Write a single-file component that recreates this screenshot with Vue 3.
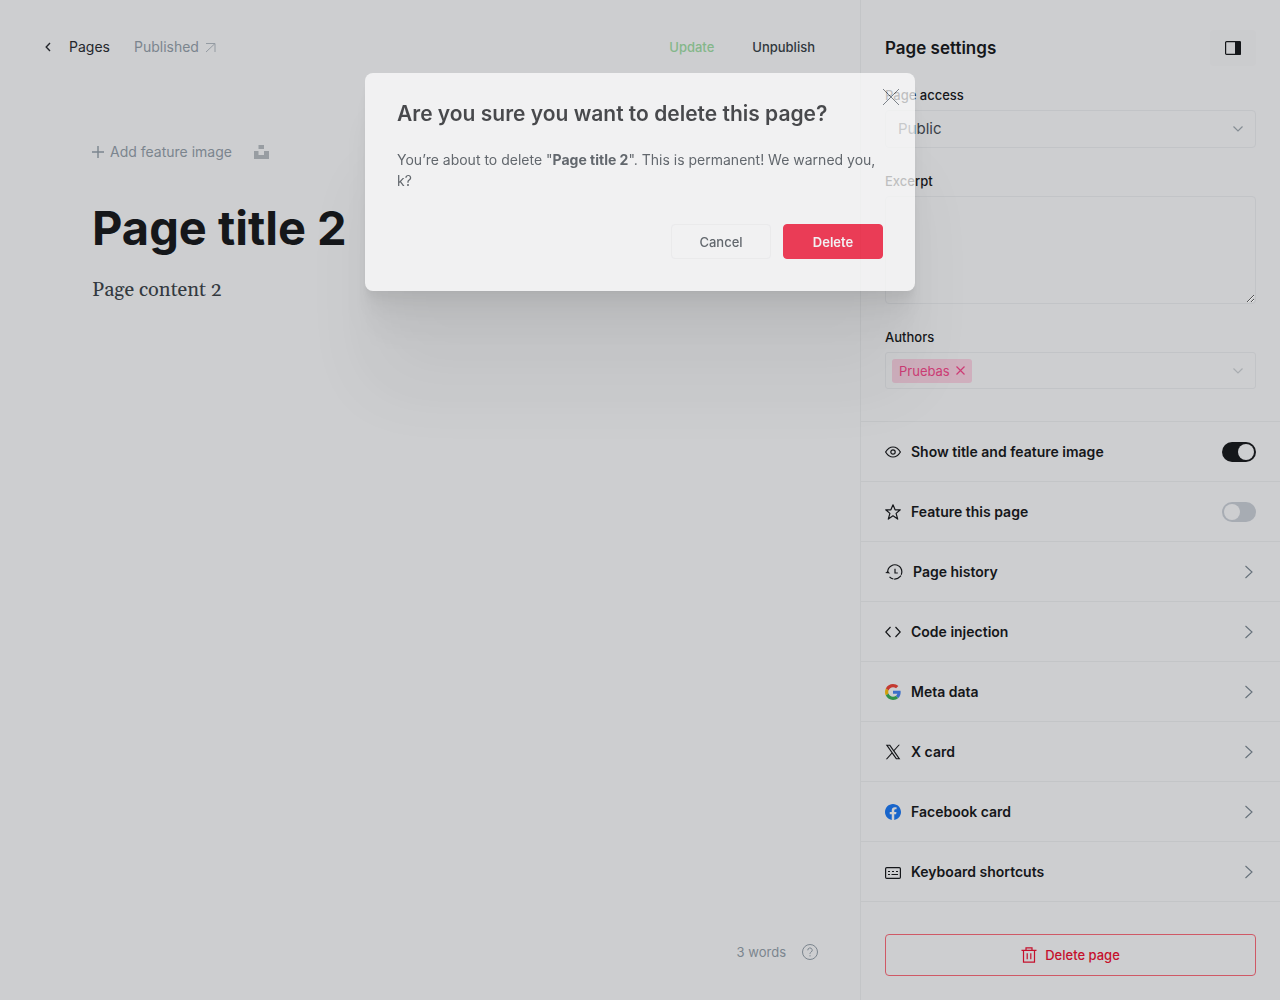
<script setup>
import { ref } from 'vue'

const access = ref('public')
const excerpt = ref('')
const showTitle = ref(true)
const featured = ref(false)
const links = ['Page history', 'Code injection', 'Meta data', 'X card', 'Facebook card', 'Keyboard shortcuts']
</script>

<template>
  <div class="app">
    <main class="editor">
      <header class="topbar">
        <a class="back" href="#">
          <svg width="6" height="10" viewBox="0 0 6 10"><path d="M5 1 1.200 5 5 9" fill="none" stroke="currentColor" stroke-width="1.400" /></svg>
          Pages
        </a>
        <a class="status" href="#">
          Published
          <svg width="11" height="11" viewBox="0 0 11 11"><path d="M1 1.500h9v8.500M10 1.500 1 10" fill="none" stroke="currentColor" /></svg>
        </a>
        <div class="actions">
          <button class="update" type="button">Update</button>
          <button type="button">Unpublish</button>
        </div>
      </header>

      <article class="content">
        <div class="feature">
          <button type="button">
            <svg width="12" height="12" viewBox="0 0 12 12"><path d="M6 0v12M0 6h12" stroke="currentColor" stroke-width="1.400" /></svg>
            Add feature image
          </button>
          <button type="button" aria-label="Unsplash">
            <svg width="15" height="14" viewBox="0 0 15 14"><path d="M4.500 0h5.500v4H4.500zM0 6h4.500v4H10V6h5v8H0z" fill="#989da2" /></svg>
          </button>
        </div>
        <h1>Page title 2</h1>
        <p>Page content 2</p>
      </article>

      <footer class="count">
        <span>3 words</span>
        <a href="#" aria-label="Help">
          <svg width="16" height="16" viewBox="0 0 16 16" fill="none" stroke="currentColor"><circle cx="8" cy="8" r="7.500" /><path d="M5.800 6.300a2.200 2.200 0 1 1 3.400 1.700C8.300 8.600 8 8.900 8 10M8 11.200v1.200" /></svg>
        </a>
      </footer>
    </main>

    <aside class="settings">
      <div class="panel">
        <div class="head">
          <h2>Page settings</h2>
          <button type="button" aria-label="Toggle settings">
            <svg width="16" height="14" viewBox="0 0 16 14"><rect x=".6" y=".6" width="14.800" height="12.800" rx="1" fill="none" stroke="#15171a" stroke-width="1.200" /><path d="M10 0h4.500A1.500 1.500 0 0 1 16 1.500v11a1.500 1.500 0 0 1-1.500 1.500H10z" fill="#15171a" /></svg>
          </button>
        </div>

        <div class="field">
          <label for="access">Page access</label>
          <div class="control">
            <select id="access" v-model="access"><option value="public">Public</option></select>
            <svg class="caret" width="10" height="6" viewBox="0 0 10 6"><path d="m.5.5 4.500 4.500L9.500.5" fill="none" stroke="#858d94" stroke-width="1.200" /></svg>
          </div>
        </div>
        <div class="field">
          <label for="excerpt">Excerpt</label>
          <textarea id="excerpt" v-model="excerpt"></textarea>
        </div>
        <div class="field">
          <label for="authors">Authors</label>
          <div class="tokens">
            <span class="token">Pruebas
              <button type="button" aria-label="Remove Pruebas"><svg width="9" height="9" viewBox="0 0 9 9"><path d="m.5.5 8 8m0-8-8 8" stroke="currentColor" stroke-width="1.200" /></svg></button>
            </span>
            <input id="authors" type="text" />
            <svg class="caret" width="10" height="6" viewBox="0 0 10 6"><path d="m.5.5 4.500 4.500L9.500.5" fill="none" stroke="#a9adb1" stroke-width="1.200" /></svg>
          </div>
        </div>
      </div>

      <ul class="rows">
        <li>
          <label class="row">
            <svg width="16" height="16" viewBox="0 0 16 16" fill="none" stroke="currentColor" stroke-width="1.200"><path d="M.6 8C2.400 5 5 3 8 3s5.600 2 7.400 5c-1.800 3-4.400 5-7.400 5S2.400 11 .6 8z" /><circle cx="8" cy="8" r="2.200" /></svg>
            <span>Show title and feature image</span>
            <input v-model="showTitle" class="switch" type="checkbox" />
          </label>
        </li>
        <li>
          <label class="row">
            <svg width="16" height="16" viewBox="0 0 16 16" fill="none" stroke="currentColor" stroke-width="1.200" stroke-linejoin="round"><path d="m8 .8 2.100 5h5.200l-4.200 3.600 1.600 5.700L8 11.800l-4.700 3.300 1.600-5.700L.7 5.800h5.200z" /></svg>
            <span>Feature this page</span>
            <input v-model="featured" class="switch" type="checkbox" />
          </label>
        </li>
        <li v-for="(name, i) in links" :key="name">
          <button class="row" type="button">
            <svg v-if="i === 0" width="18" height="16" viewBox="0 0 18 16" fill="none" stroke="currentColor" stroke-width="1.200"><path d="M2.700 8.500A7.200 7.200 0 0 1 13.500 1.800" /><path d="M13.500 1.800A7.200 7.200 0 1 1 4.500 12.900" stroke-dasharray="10 .8 8 .8" /><path d="M.2 9 2.700 7l2.500 2.600z" fill="currentColor" stroke="none" /><path d="M10 4.800V9h2.800" /></svg>
            <svg v-else-if="i === 1" width="16" height="16" viewBox="0 0 16 16" fill="none" stroke="currentColor" stroke-width="1.200"><path d="M5.500 3 .8 8l4.700 5M10.500 3l4.700 5-4.700 5" /></svg>
            <svg v-else-if="i === 2" width="16" height="16" viewBox="0 0 48 48"><path fill="#c43a31" d="M24 9.500c3.540 0 6.710 1.220 9.210 3.600l6.850-6.850C35.900 2.380 30.470 0 24 0 14.620 0 6.510 5.380 2.560 13.220l7.980 6.190C12.430 13.720 17.740 9.500 24 9.500z" /><path fill="#3c6fc9" d="M46.980 24.550c0-1.570-.15-3.090-.38-4.550H24v9.020h12.940c-.58 2.960-2.260 5.480-4.780 7.180l7.730 6c4.510-4.180 7.090-10.360 7.090-17.650z" /><path fill="#d09e0c" d="M10.530 28.590A14.500 14.500 0 0 1 9.770 24c0-1.600.27-3.140.76-4.590l-7.980-6.190A23.900 23.900 0 0 0 0 24c0 3.880.92 7.540 2.560 10.780z" /><path fill="#2f9149" d="M24 48c6.480 0 11.930-2.130 15.890-5.810l-7.730-6c-2.150 1.450-4.920 2.300-8.160 2.300-6.260 0-11.570-4.220-13.470-9.910l-7.980 6.190C6.510 42.620 14.620 48 24 48z" /></svg>
            <svg v-else-if="i === 3" width="16" height="16" viewBox="0 0 24 24"><path fill="currentColor" d="M14.200 10.200 22.300 1h-2l-7 8-5.600-8H1.200l8.500 12.200L1.200 23h2l7.400-8.500 5.900 8.500H23zM4.400 2.800h2.200L19.900 21.200h-2.300z" /></svg>
            <svg v-else-if="i === 4" width="16" height="16" viewBox="0 0 24 24"><path fill="#1865cb" d="M24 12.070C24 5.400 18.630 0 12 0S0 5.400 0 12.070C0 18.100 4.390 23.090 10.130 24v-8.440H7.080v-3.490h3.050V9.410c0-3.020 1.790-4.690 4.530-4.690 1.310 0 2.680.24 2.680.24v2.970h-1.510c-1.490 0-1.960.93-1.960 1.890v2.250h3.330l-.53 3.490h-2.800V24C19.610 23.090 24 18.100 24 12.070z" /></svg>
            <svg v-else width="16" height="16" viewBox="0 0 16 16" fill="none" stroke="currentColor" stroke-width="1.200"><rect x=".6" y="3.600" width="14.800" height="10.800" rx="1.200" /><path d="M3 7.500h2m2 0h2m2 0h2M3 10.500h2m1.500 0H13" /></svg>
            <span>{{ name }}</span>
            <svg class="next" width="8" height="14" viewBox="0 0 8 14"><path d="m.5 1 6.500 6-6.500 6" fill="none" stroke="#66717b" stroke-width="1.100" /></svg>
          </button>
        </li>
      </ul>

      <div class="danger">
        <button type="button">
          <svg width="16" height="16" viewBox="0 0 16 16" fill="none" stroke="currentColor" stroke-width="1.200"><path d="M.5 3.300h15M5 3.300V.8h6v2.500M2.500 3.300v11.900h11V3.300M6.200 6.300v6M9.800 6.300v6" /></svg>
          Delete page
        </button>
      </div>
    </aside>

    <div class="overlay">
      <section class="modal" role="dialog" aria-modal="true" aria-labelledby="dialog-title">
        <h2 id="dialog-title">Are you sure you want to delete this page?</h2>
        <p>You’re about to delete "<strong>Page title 2</strong>". This is permanent! We warned you, k?</p>
        <div class="buttons">
          <button type="button">Cancel</button>
          <button class="confirm" type="button">Delete</button>
        </div>
        <button class="close" type="button" aria-label="Close">
          <svg width="16" height="16" viewBox="0 0 16 16"><path d="m0 0 16 16m0-16L0 16" stroke="#5d666e" stroke-width="1" /></svg>
        </button>
      </section>
    </div>
  </div>
</template>

<style>
body { margin: 0; background: #cdced0; }
</style>

<style scoped>
* { box-sizing: border-box; }
.app { display: flex; min-height: 100vh; color: #15171a; background: #cdced0; font: 14px/20px Inter, sans-serif; }
svg { display: block; flex: none; }
h1, h2, p, ul { margin: 0; padding: 0; }
a { color: inherit; text-decoration: none; }
button { display: flex; align-items: center; padding: 0; border: 0; background: none; color: inherit; font: inherit; cursor: pointer; }

.editor { display: flex; flex: 1; flex-direction: column; min-width: 0; }
.topbar { display: flex; align-items: center; gap: 24px; padding: 37px 45px 0; }
.back { display: flex; align-items: center; gap: 18px; color: #24272c; }
.status { display: flex; align-items: center; gap: 6px; color: #7b858e; }
.status svg { color: #949ba2; }
.actions { display: flex; gap: 38px; margin-left: auto; font-size: 13px; font-weight: 500; color: #30373d; }
.update { color: #84b78a; }
.content { flex: 1; padding: 85px 92px 0; }
.feature { display: flex; align-items: center; gap: 22px; color: #7b858e; }
.feature button { gap: 6px; }
.content h1 { margin-top: 36px; font-size: 47px; line-height: 60px; font-weight: 700; }
.content p { margin-top: 16px; color: #33393f; font-family: Gelasio, Georgia, "Liberation Serif", serif; font-size: 20px; line-height: 32px; font-variant-numeric: oldstyle-nums; }
.count { display: flex; align-items: center; justify-content: flex-end; gap: 16px; padding: 0 42px 38px; font-size: 13px; color: #7b858e; }

.settings { display: flex; flex-direction: column; width: 420px; flex: none; border-left: 1px solid #c3c5c7; }
.panel { padding: 30px 24px 32px; }
.head { display: flex; align-items: center; justify-content: space-between; margin-bottom: 20px; }
.head h2 { font-size: 17px; line-height: 24px; font-weight: 600; }
.head button { justify-content: center; width: 46px; height: 36px; border-radius: 4px; background: #cbccce; }
.field { display: flex; flex-direction: column; gap: 6px; }
.field + .field { margin-top: 24px; }
.field label { font-size: 13px; line-height: 18px; font-weight: 500; }
.control { position: relative; }
.control select { display: block; width: 100%; height: 38px; padding: 0 12px; border: 1px solid #c2c4c7; border-radius: 4px; appearance: none; background: transparent; color: #394047; font: 15px/20px Inter, sans-serif; }
.control .caret { position: absolute; top: 16px; right: 13px; pointer-events: none; }
.field textarea { display: block; width: 100%; height: 108px; padding: 8px 12px; border: 1px solid #c2c4c7; border-radius: 4px; background: transparent; font: inherit; resize: vertical; }
.tokens { display: flex; align-items: center; height: 37px; padding: 0 12px 0 6px; border: 1px solid #c2c4c7; border-radius: 3px; }
.token { display: flex; align-items: center; gap: 6px; height: 24px; padding: 0 7px; border-radius: 3px; background: #cfafbd; color: #cd3c75; font-size: 13px; }
.tokens input { flex: 1; min-width: 0; border: 0; background: none; font: inherit; outline: 0; }
.rows { border-bottom: 1px solid #c3c5c7; list-style: none; }
.rows li { border-top: 1px solid #c3c5c7; }
.row { display: flex; align-items: center; gap: 10px; width: 100%; height: 59px; padding: 0 24px; font-weight: 600; text-align: left; }
.row span { flex: 1; }
.next { margin-right: 3px; }
.switch { position: relative; width: 34px; height: 20px; margin: 0; border-radius: 10px; appearance: none; background: #a7acb3; }
.switch::before { content: ""; position: absolute; top: 2px; left: 2px; width: 16px; height: 16px; border-radius: 50%; background: #cdced0; }
.switch:checked { background: #15171a; }
.switch:checked::before { left: 16px; }
.danger { padding: 32px 24px 24px; }
.danger button { justify-content: center; gap: 8px; width: 100%; height: 42px; border: 1px solid #cf5966; border-radius: 4px; color: #c5102c; font-size: 13px; font-weight: 500; }

.overlay { position: fixed; inset: 0; display: flex; align-items: flex-start; justify-content: center; padding: 73px 24px; }
.modal { position: relative; width: 100%; max-width: 550px; padding: 24px 32px 32px; border-radius: 8px; background: #fff; opacity: .72; box-shadow: 0 3px 2px rgba(0, 0, 0, .02), 0 7px 5px rgba(0, 0, 0, .03), 0 12px 10px rgba(0, 0, 0, .035), 0 22px 18px rgba(0, 0, 0, .04), 0 42px 33px rgba(0, 0, 0, .05), 0 100px 80px rgba(0, 0, 0, .07); }
.modal h2 { font-size: 21px; line-height: 34px; font-weight: 600; }
.modal p { margin-top: 18px; color: #394047; line-height: 21px; }
.buttons { display: flex; justify-content: flex-end; gap: 12px; margin-top: 33px; }
.buttons button { justify-content: center; width: 100px; height: 35px; border: 1px solid #f5f5f6; border-radius: 4px; color: #394047; font-size: 13px; font-weight: 500; }
.buttons .confirm { border-color: #f60528; background: #f60528; color: #fff; font-weight: 600; }
.modal .close { position: absolute; top: 16px; right: 16px; }
</style>
